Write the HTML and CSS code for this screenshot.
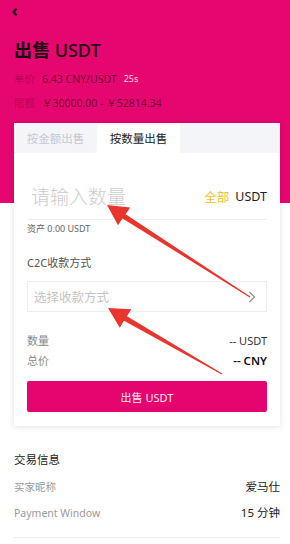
FILE: index.html
```html
<!DOCTYPE html>
<html lang="zh">
<head>
<meta charset="utf-8">
<title>出售 USDT</title>
<link rel="stylesheet" href="styles.css">
</head>
<body>
<div class="page">
  <header class="header">
    <div class="back">
      <svg width="8" height="10" viewBox="0 0 8 10"><polyline points="5.5,1.5 2.5,5 5.5,8.5" fill="none" stroke="#1c0b12" stroke-width="2"/></svg>
    </div>
    <h1 class="title">出售 <span class="title-coin">USDT</span></h1>
    <div class="meta"><span class="meta-label">单价</span><span class="meta-value">6.43 CNY/USDT</span><span class="timer">25s</span></div>
    <div class="meta meta-2"><span class="meta-label">限额</span><span class="meta-value">￥30000.00 - ￥52814.34</span></div>
  </header>

  <section class="card">
    <div class="tabs">
      <div class="tab">按金额出售</div>
      <div class="tab tab-active">按数量出售</div>
      <div class="tab-rest"></div>
    </div>
    <div class="card-body">
      <div class="amount">
        <span class="amount-placeholder">请输入数量</span>
        <span class="amount-all">全部</span>
        <span class="amount-unit">USDT</span>
      </div>
      <div class="asset">资产 0.00 USDT</div>
      <div class="label">C2C收款方式</div>
      <div class="select">
        <span class="select-placeholder">选择收款方式</span>
        <svg class="chevron" width="8" height="12" viewBox="0 0 8 12"><polyline points="1.5,1 6.5,6 1.5,11" fill="none" stroke="#888" stroke-width="1.1"/></svg>
      </div>
      <div class="sum-row"><span class="sum-label">数量</span><span class="sum-value">-- USDT</span></div>
      <div class="sum-row sum-row-2"><span class="sum-label">总价</span><span class="sum-value sum-strong">-- CNY</span></div>
      <button class="sell-btn">出售 USDT</button>
    </div>
  </section>

  <section class="info">
    <div class="info-title">交易信息</div>
    <div class="info-row"><span class="info-label">买家昵称</span><span class="info-value">爱马仕</span></div>
    <div class="info-row info-row-2"><span class="info-label">Payment Window</span><span class="info-value">15 分钟</span></div>
    <div class="info-divider"></div>
  </section>

  <svg class="arrows" width="290" height="544" viewBox="0 0 290 544">
    <polygon fill="#e8352d" points="107,205 130.2,207.4 125.6,214.2 250.3,296.6 249.7,297.4 122.5,218.4 118.0,225.2"/>
    <polygon fill="#e8352d" points="108,308 131.3,309.3 127.0,316.3 222.25,373.57 221.75,374.43 124.0,320.7 119.8,327.7"/>
  </svg>
</div>
</body>
</html>
```

FILE: styles.css
```css
* { box-sizing: border-box; margin: 0; padding: 0; }
html, body { background: #ffffff; }
body {
  width: 290px;
  font-family: "Noto Sans", "Noto Sans CJK SC", sans-serif;
  color: #222;
}
.page { position: relative; width: 290px; height: 544px; overflow: hidden; }

.header {
  background: #e6066f;
  height: 203px;
  padding: 4px 14px 0;
}
.back { height: 16px; display: flex; align-items: center; margin-left: -3px; }
.title {
  margin-top: 18px;
  font-size: 18px;
  line-height: 24px;
  font-weight: 700;
  color: #1c0b12;
}
.title-coin { font-weight: 500; }
.meta {
  margin-top: 8px;
  display: flex;
  align-items: center;
  font-size: 10.5px;
  line-height: 18px;
}
.meta-2 { margin-top: 6px; }
.meta-label { color: rgba(60, 0, 25, 0.3); margin-right: 7px; }
.meta-value { color: rgba(40, 0, 15, 0.62); }
.timer { color: #ffd6ea; font-size: 9px; margin-left: 7px; }

.card {
  margin: -80px 10px 0 14px;
  background: #fff;
  box-shadow: 0 1px 6px rgba(0, 0, 0, 0.12);
  padding-bottom: 14px;
}
.tabs { display: flex; height: 30px; background: #f4f5f9; }
.tab {
  width: 83px;
  display: flex;
  align-items: center;
  justify-content: center;
  font-size: 11.5px;
  color: #c5c8d0;
}
.tab-active { background: #fff; color: #222; }
.tab-rest { flex: 1; }

.card-body { padding: 0 13px; }
.amount {
  padding-top: 27px;
  height: 67px;
  padding-bottom: 7px;
  border-bottom: 1px solid #eeeeee;
  display: flex;
  align-items: center;
}
.amount-placeholder { font-size: 19px; font-weight: 300; color: #cdcdcd; margin-left: 4px; flex: 1; }
.amount-all { font-size: 12.5px; color: #f0c22a; margin-right: 6px; }
.amount-unit { font-size: 12.5px; color: #222; }

.asset { margin-top: 2px; font-size: 9px; line-height: 14px; color: #666; }
.label { margin-top: 19px; font-size: 11px; line-height: 16px; color: #555; }
.select {
  margin-top: 10px;
  height: 31px;
  border: 1px solid #eeeeee;
  display: flex;
  align-items: center;
  padding: 0 10px 0 6px;
}
.select-placeholder { flex: 1; font-size: 12.5px; color: #c4c4c4; }

.sum-row {
  margin-top: 21px;
  display: flex;
  justify-content: space-between;
  align-items: center;
  line-height: 16px;
  font-size: 11px;
}
.sum-row-2 { margin-top: 4px; }
.sum-label { color: #8a8a8a; }
.sum-value { color: #333; }
.sum-strong { color: #111; font-weight: 600; font-size: 11.5px; }

.sell-btn {
  margin-top: 12px;
  width: 100%;
  height: 31px;
  border: none;
  border-radius: 2px;
  background: #e4066e;
  color: #ffe6f1;
  font-family: inherit;
  font-size: 11px;
  display: block;
}

.info { padding: 0 10px 0 14px; }
.info-title { margin-top: 25px; font-size: 11.5px; line-height: 18px; color: #222; }
.info-row {
  margin-top: 9px;
  display: flex;
  justify-content: space-between;
  align-items: center;
  line-height: 18px;
}
.info-row-2 { margin-top: 8px; }
.info-label { font-size: 10.5px; color: #9a9a9a; }
.info-value { font-size: 11.5px; color: #222; }
.info-divider { margin-top: 15px; border-top: 1px solid #eeeeee; }

.arrows { position: absolute; left: 0; top: 0; pointer-events: none; }
```
